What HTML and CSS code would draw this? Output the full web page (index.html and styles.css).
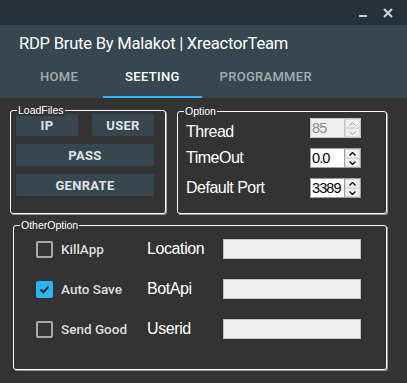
FILE: index.html
```html
<!DOCTYPE html>
<html lang="en">
<head>
    <meta charset="UTF-8">
    <meta name="viewport" content="width=device-width, initial-scale=1.0">
    <title>RDP Brute</title>
    <link rel="stylesheet" href="styles.css">
</head>
<body>

<div class="window">
    <div class="titlebar">
        <span class="win-min"></span>
        <svg class="win-close" width="10" height="10" viewBox="0 0 10 10">
            <path d="M1 1 L9 9 M9 1 L1 9" stroke="#d0d4d6" stroke-width="2" fill="none"/>
        </svg>
    </div>

    <div class="header">
        <h1 class="app-title">RDP Brute By Malakot | XreactorTeam</h1>
        <div class="tabs">
            <span class="tab">HOME</span>
            <span class="tab active">SEETING</span>
            <span class="tab tab-last">PROGRAMMER</span>
        </div>
    </div>

    <div class="content">
        <div class="top-row">
            <!-- load files -->
            <div class="group load-files">
                <span class="legend">LoadFiles</span>
                <div class="btn-grid">
                    <button class="raised">IP</button>
                    <button class="raised">USER</button>
                    <button class="raised wide">PASS</button>
                    <button class="raised wide">GENRATE</button>
                </div>
            </div>

            <!-- options -->
            <div class="group options">
                <span class="legend">Option</span>
                <div class="opt-row">
                    <span class="opt-label first">Thread</span>
                    <div class="spin disabled">
                        <span class="spin-val">85</span>
                        <div class="spin-btns">
                            <span class="spin-btn"><svg width="7" height="4" viewBox="0 0 7 4"><path d="M0.5 3.5 L3.5 0.5 L6.5 3.5" stroke="currentColor" fill="none"/></svg></span>
                            <span class="spin-btn"><svg width="7" height="4" viewBox="0 0 7 4"><path d="M0.5 0.5 L3.5 3.5 L6.5 0.5" stroke="currentColor" fill="none"/></svg></span>
                        </div>
                    </div>
                </div>
                <div class="opt-row">
                    <span class="opt-label">TimeOut</span>
                    <div class="spin">
                        <span class="spin-val">0.0</span>
                        <div class="spin-btns">
                            <span class="spin-btn"><svg width="7" height="4" viewBox="0 0 7 4"><path d="M0.5 3.5 L3.5 0.5 L6.5 3.5" stroke="currentColor" stroke-width="1.4" fill="none"/></svg></span>
                            <span class="spin-btn"><svg width="7" height="4" viewBox="0 0 7 4"><path d="M0.5 0.5 L3.5 3.5 L6.5 0.5" stroke="currentColor" stroke-width="1.4" fill="none"/></svg></span>
                        </div>
                    </div>
                </div>
                <div class="opt-row">
                    <span class="opt-label">Default Port</span>
                    <div class="spin">
                        <span class="spin-val">3389</span>
                        <div class="spin-btns">
                            <span class="spin-btn"><svg width="7" height="4" viewBox="0 0 7 4"><path d="M0.5 3.5 L3.5 0.5 L6.5 3.5" stroke="currentColor" stroke-width="1.4" fill="none"/></svg></span>
                            <span class="spin-btn"><svg width="7" height="4" viewBox="0 0 7 4"><path d="M0.5 0.5 L3.5 3.5 L6.5 0.5" stroke="currentColor" stroke-width="1.4" fill="none"/></svg></span>
                        </div>
                    </div>
                </div>
            </div>
        </div>

        <!-- other options -->
        <div class="group other">
            <span class="legend">OtherOption</span>
            <div class="other-grid">
                <label class="check"><span class="box"></span>KillApp</label>
                <span class="field-label">Location</span>
                <span class="text-field"></span>

                <label class="check"><span class="box checked"><svg width="13" height="13" viewBox="0 0 13 13"><path d="M2.5 6.5 L5.3 9.3 L10.5 3.8" stroke="#2b2b2b" stroke-width="2" fill="none"/></svg></span>Auto Save</label>
                <span class="field-label">BotApi</span>
                <span class="text-field"></span>

                <label class="check"><span class="box"></span>Send Good</label>
                <span class="field-label">Userid</span>
                <span class="text-field"></span>
            </div>
        </div>
    </div>
</div>

</body>
</html>
```

FILE: styles.css
```css
* { margin: 0; padding: 0; box-sizing: border-box; }
body {
    width: 407px; height: 383px; overflow: hidden;
    background: #333333; font-family: Roboto, "Liberation Sans", sans-serif;
}
.window { width: 407px; height: 383px; display: flex; flex-direction: column; background: #333333; }

/* title bar */
.titlebar {
    height: 25px; background: #263238;
    display: flex; justify-content: flex-end; align-items: flex-start;
    padding-right: 14px;
}
.win-min { width: 8px; height: 2px; background: #c4c9cb; margin-top: 15px; margin-right: 16px; }
.win-close { margin-top: 8px; }

/* header + tabs */
.header { height: 73px; background: #37474f; padding-top: 7px; }
.app-title {
    font-size: 16.6px; font-weight: 400; color: #ffffff;
    line-height: 24px; padding-left: 19px; letter-spacing: -0.25px;
}
.tabs { display: flex; height: 42px; padding-left: 18px; }
.tab {
    display: flex; align-items: center; padding: 0 22px;
    font-size: 13px; font-weight: 500; letter-spacing: 0.3px;
    color: #a3acb0; border-bottom: 2px solid transparent;
}
.tab.active { color: #ffffff; border-bottom-color: #29b6f6; margin-left: 3px; }
.tab-last { padding-left: 18px; }

/* content */
.content { padding: 12px 0 0 10px; }
.top-row { display: flex; align-items: flex-start; gap: 11px; }

.group {
    position: relative;
    border: 1px solid #ffffff; border-radius: 3px;
    box-shadow: 1px 1px 0 #9a9a9a;
}
.legend {
    position: absolute; top: -7px; left: 6px;
    font-family: "Liberation Sans", Arial, sans-serif; font-size: 10.5px; line-height: 12px;
    color: #ffffff; background: #333333; padding: 0 1px;
}

.load-files { width: 156px; height: 104px; padding: 3px 0 0 5px; }
.btn-grid { display: grid; grid-template-columns: 62px 62px; column-gap: 14px; row-gap: 8px; }
.raised {
    height: 22px; border: none; border-radius: 1px; background: #37474f;
    color: #dfe2e3; font-family: Roboto, sans-serif; font-size: 13px; font-weight: 700;
    letter-spacing: 0.3px;
}
.raised.wide { grid-column: 1 / 3; }

.options {
    width: 210px; height: 103px; margin-top: 1px;
    padding: 6px 25px 0 8px;
    display: flex; flex-direction: column; gap: 10px;
}
.opt-row { display: flex; justify-content: space-between; align-items: center; height: 20px; }
.opt-label {
    font-family: "Liberation Sans", Arial, sans-serif; font-size: 16px; letter-spacing: -0.5px;
    color: #ffffff;
}
.opt-label.first { margin-top: 7px; }

.spin {
    width: 51px; height: 20px; display: flex;
    border: 1px solid #9f9f9f; background: #ffffff;
}
.spin-val {
    flex: 1; font-family: "Liberation Sans", Arial, sans-serif;
    font-size: 14.5px; letter-spacing: -0.9px; line-height: 18px; color: #000000; padding-left: 1px;
    overflow: hidden;
}
.spin-btns { width: 16px; display: flex; flex-direction: column; border-left: 1px solid #9f9f9f; }
.spin-btn {
    flex: 1; display: flex; justify-content: center; align-items: center;
    background: #f0f0f0; border: 1px solid #dadada; color: #111111;
}
.spin.disabled { border-color: #c4c4c4; background: #f0f0f0; }
.spin.disabled .spin-val { color: #8c8c8c; }
.spin.disabled .spin-btns { border-left-color: #c4c4c4; }
.spin.disabled .spin-btn { color: #9c9c9c; }

.other { width: 374px; height: 145px; margin: 11px 0 0 3px; padding: 13px 0 0 22px; }
.other-grid {
    display: grid; grid-template-columns: 111px 76px 138px;
    grid-auto-rows: 20px; row-gap: 20px; align-items: center;
}
.check {
    display: flex; align-items: center; gap: 8px;
    font-size: 13.5px; font-weight: 500; color: #dedede;
}
.box {
    width: 17px; height: 17px; border: 2px solid #a9a9a9; border-radius: 2px;
    display: flex; justify-content: center; align-items: center;
}
.box.checked { background: #29b6f6; border-color: #29b6f6; }
.field-label {
    font-family: "Liberation Sans", Arial, sans-serif; font-size: 16px; letter-spacing: -0.4px;
    color: #ffffff;
}
.text-field { height: 20px; background: #f0f0f0; border: 1px solid #c3c3c3; }
```
